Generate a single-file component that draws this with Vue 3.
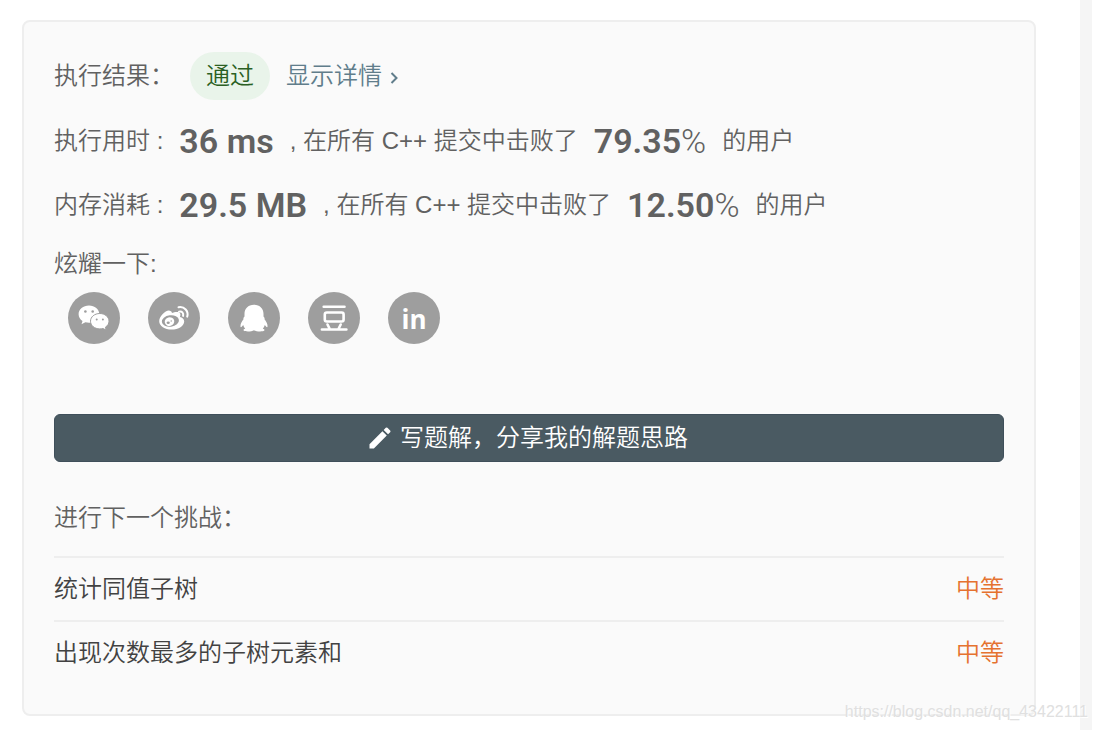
<template>
  <div class="page">
    <main class="result-card">
      <div class="row summary">
        <span>执行结果：</span>
        <span class="status">通过</span>
        <a class="detail" href="#">
          显示详情
          <svg class="chevron" viewBox="0 0 8 12"><path d="M1.5 1 6.5 6l-5 5" /></svg>
        </a>
      </div>

      <div v-for="item in stats" :key="item.label" class="row">
        <span>{{ item.label }} :</span>
        <strong class="value">{{ item.value }}</strong>
        <span>, 在所有 C++ 提交中击败了</span>
        <span class="value"><strong>{{ item.percent }}</strong>%</span>
        <span>的用户</span>
      </div>

      <div class="share-title">炫耀一下:</div>
      <nav class="share">
        <a href="#" aria-label="微信">
          <svg viewBox="0 0 52 52">
            <path d="M21 13.6c-5.8 0-10.4 3.8-10.4 8.6 0 2.8 1.5 5.2 3.9 6.8l-1 3.3 3.9-2c1.1.3 2.3.5 3.6.5 5.7 0 10.3-3.8 10.3-8.6S26.7 13.6 21 13.6z" />
            <circle class="hole" cx="17.4" cy="19.5" r="1.3" />
            <circle class="hole" cx="24.7" cy="19.5" r="1.3" />
            <path class="cut" d="M31.8 21.5c-5.2 0-9.3 3.4-9.3 7.7s4.1 7.7 9.3 7.7c1.1 0 2.1-.1 3.1-.4l3.4 1.6-.9-2.9c2.2-1.4 3.6-3.5 3.6-6 0-4.3-4.1-7.7-9.2-7.7z" />
            <circle class="hole" cx="28.7" cy="27.4" r="1" />
            <circle class="hole" cx="34.9" cy="27.4" r="1" />
          </svg>
        </a>
        <a href="#" aria-label="微博">
          <svg viewBox="0 0 52 52">
            <path d="M22.5 19.1c-1.5-1.6-5.3.1-8 3.1-2.2 2.3-3.3 4.8-3.3 7 0 4.8 5.8 8.3 12.3 8.3 7.2 0 12.7-3.9 12.7-8.1 0-2.5-2.1-4-4.2-4.5.9-2.5.3-4.2-1.6-4.8-2-.6-4.5.1-6.6 1 .3-.8-.1-1.500-1.300-2z" />
            <ellipse class="hole" cx="22.4" cy="29" rx="8.6" ry="5.7" transform="rotate(-7 22.4 29)" />
            <ellipse cx="21.5" cy="29.6" rx="4.8" ry="4.300" transform="rotate(-15 21.5 29.6)" />
            <ellipse class="hole" cx="20.2" cy="30.8" rx="1.6" ry="1.3" />
            <circle class="hole" cx="23.2" cy="29" r=".7" />
            <path class="wave" d="M30.5 15.200c5.900-1.200 10.400 4.100 8.700 9.400M31 19.600c2.900-.8 4.800 1.400 4.100 4.300" />
          </svg>
        </a>
        <a href="#" aria-label="QQ">
          <svg viewBox="0 0 52 52">
            <path d="M26 12.7c-6 0-9.5 4.1-9.5 9.1v2.6c-1 .9-1.3 1.9-1 2.9-2 2.3-3.2 5-3 7.3.1 1.5 1.5.2 2.7-1.5.4 1.5 1.1 2.7 2 3.6-1.5.4-2.1 1.1-1.5 1.8 1.3 1.3 7.8 1.2 10.3-.3 2.5 1.5 9 1.6 10.3.3.6-.7 0-1.4-1.5-1.8.9-.9 1.6-2.1 2-3.6 1.2 1.7 2.6 3 2.7 1.5.2-2.300-1-5-3-7.300.3-1 0-2-1-2.900v-2.600c0-5-3.500-9.100-9.500-9.100z" />
          </svg>
        </a>
        <a href="#" aria-label="豆瓣">
          <svg viewBox="0 0 52 52">
            <path class="line" d="M15.7 14.7h20.8M13.9 37.5h24.5M19.500 32.500l2 4M32.700 32.500l-2 4" />
            <rect class="line" x="16.8" y="20.5" width="18.8" height="9" rx="2" />
          </svg>
        </a>
        <a href="#" aria-label="LinkedIn">
          <svg viewBox="0 0 52 52"><text x="26" y="37" text-anchor="middle">in</text></svg>
        </a>
      </nav>

      <button class="write" type="button">
        <svg viewBox="0 0 24 24">
          <path d="M3 17.25V21h3.750L17.810 9.940l-3.750-3.750L3 17.250zM20.710 7.040a1 1 0 0 0 0-1.410l-2.340-2.340a1 1 0 0 0-1.410 0l-1.830 1.830 3.750 3.750 1.830-1.830z" />
        </svg>
        写题解，分享我的解题思路
      </button>

      <div class="next-title">进行下一个挑战：</div>
      <ul class="next">
        <li v-for="item in challenges" :key="item.title">
          <a href="#">{{ item.title }}</a>
          <span class="level">{{ item.level }}</span>
        </li>
      </ul>
    </main>
    <div class="gutter"></div>
    <div class="watermark">https://blog.csdn.net/qq_43422111</div>
  </div>
</template>

<script setup>
const stats = [
  { label: '执行用时', value: '36 ms', percent: '79.35' },
  { label: '内存消耗', value: '29.5 MB', percent: '12.50' },
];

const challenges = [
  { title: '统计同值子树', level: '中等' },
  { title: '出现次数最多的子树元素和', level: '中等' },
];
</script>

<style>
body {
  margin: 0;
  background: #fff;
}
</style>

<style scoped>
.page {
  position: relative;
  display: flex;
  min-height: 100vh;
  padding-right: 4px;
  box-sizing: border-box;
  overflow: hidden;
  color: #616161;
  font-family: "Liberation Sans", "Noto Sans CJK SC", sans-serif;
  font-size: 24px;
  font-weight: 350;
  line-height: 36px;
}

.result-card {
  flex: 1;
  align-self: flex-start;
  box-sizing: border-box;
  margin: 20px 44px 14px 22px;
  padding: 21px 30px 30px;
  border: 2px solid #eee;
  border-radius: 8px;
  background: #fafafa;
}

.gutter {
  width: 12px;
  background: #f5f5f5;
}

a {
  color: inherit;
  text-decoration: none;
}

.row {
  display: flex;
  align-items: center;
  height: 64px;
  white-space: nowrap;
}

.summary {
  height: 66px;
}

.status {
  margin: 0 16px;
  padding: 6px 16px;
  border-radius: 24px;
  background: #e9f4ea;
  color: #2a5f23;
}

.detail {
  display: flex;
  align-items: center;
  gap: 8px;
  color: #607d8b;
}

.chevron {
  width: 8px;
  height: 12px;
  margin-top: 4px;
  fill: none;
  stroke: currentColor;
  stroke-width: 2;
}

.value {
  margin: 0 16px;
  font-family: Roboto, sans-serif;
  font-size: 34px;
}

.value strong,
strong.value {
  font-weight: 600;
}

.share-title {
  margin-top: 9px;
}

.share {
  display: flex;
  gap: 28px;
  margin: 10px 14px 0;
}

.share a {
  width: 52px;
  height: 52px;
  border-radius: 50%;
  background: #9e9e9e;
}

.share svg {
  display: block;
  fill: #fff;
}

.share .hole {
  fill: #9e9e9e;
}

.share .cut {
  stroke: #9e9e9e;
  stroke-width: 1;
}

.share .wave,
.share .line {
  fill: none;
  stroke: #fff;
  stroke-width: 2;
  stroke-linecap: round;
}

.share .line {
  stroke-width: 2.6;
}

.share text {
  font: 700 26px "Open Sans", sans-serif;
}

.write {
  display: flex;
  align-items: center;
  justify-content: center;
  gap: 6px;
  width: 100%;
  height: 48px;
  margin-top: 70px;
  padding: 0 4px 0 0;
  border: 1px solid #3f4f5a;
  border-radius: 6px;
  background: #4a5a62;
  color: #fff;
  font: inherit;
}

.write svg {
  width: 28px;
  height: 28px;
  fill: #fff;
}

.next-title {
  margin-top: 38px;
}

.next {
  margin: 20px 0 0;
  padding: 0;
  list-style: none;
}

.next li {
  display: flex;
  align-items: center;
  justify-content: space-between;
  height: 62px;
  border-top: 2px solid #eee;
}

.next a {
  color: #424242;
}

.level {
  color: #e5722f;
}

.watermark {
  position: absolute;
  right: 8px;
  bottom: 8px;
  color: #e0e0e0;
  font-size: 16px;
  line-height: 20px;
  text-shadow: 1px 1px 0 #fff;
}
</style>
